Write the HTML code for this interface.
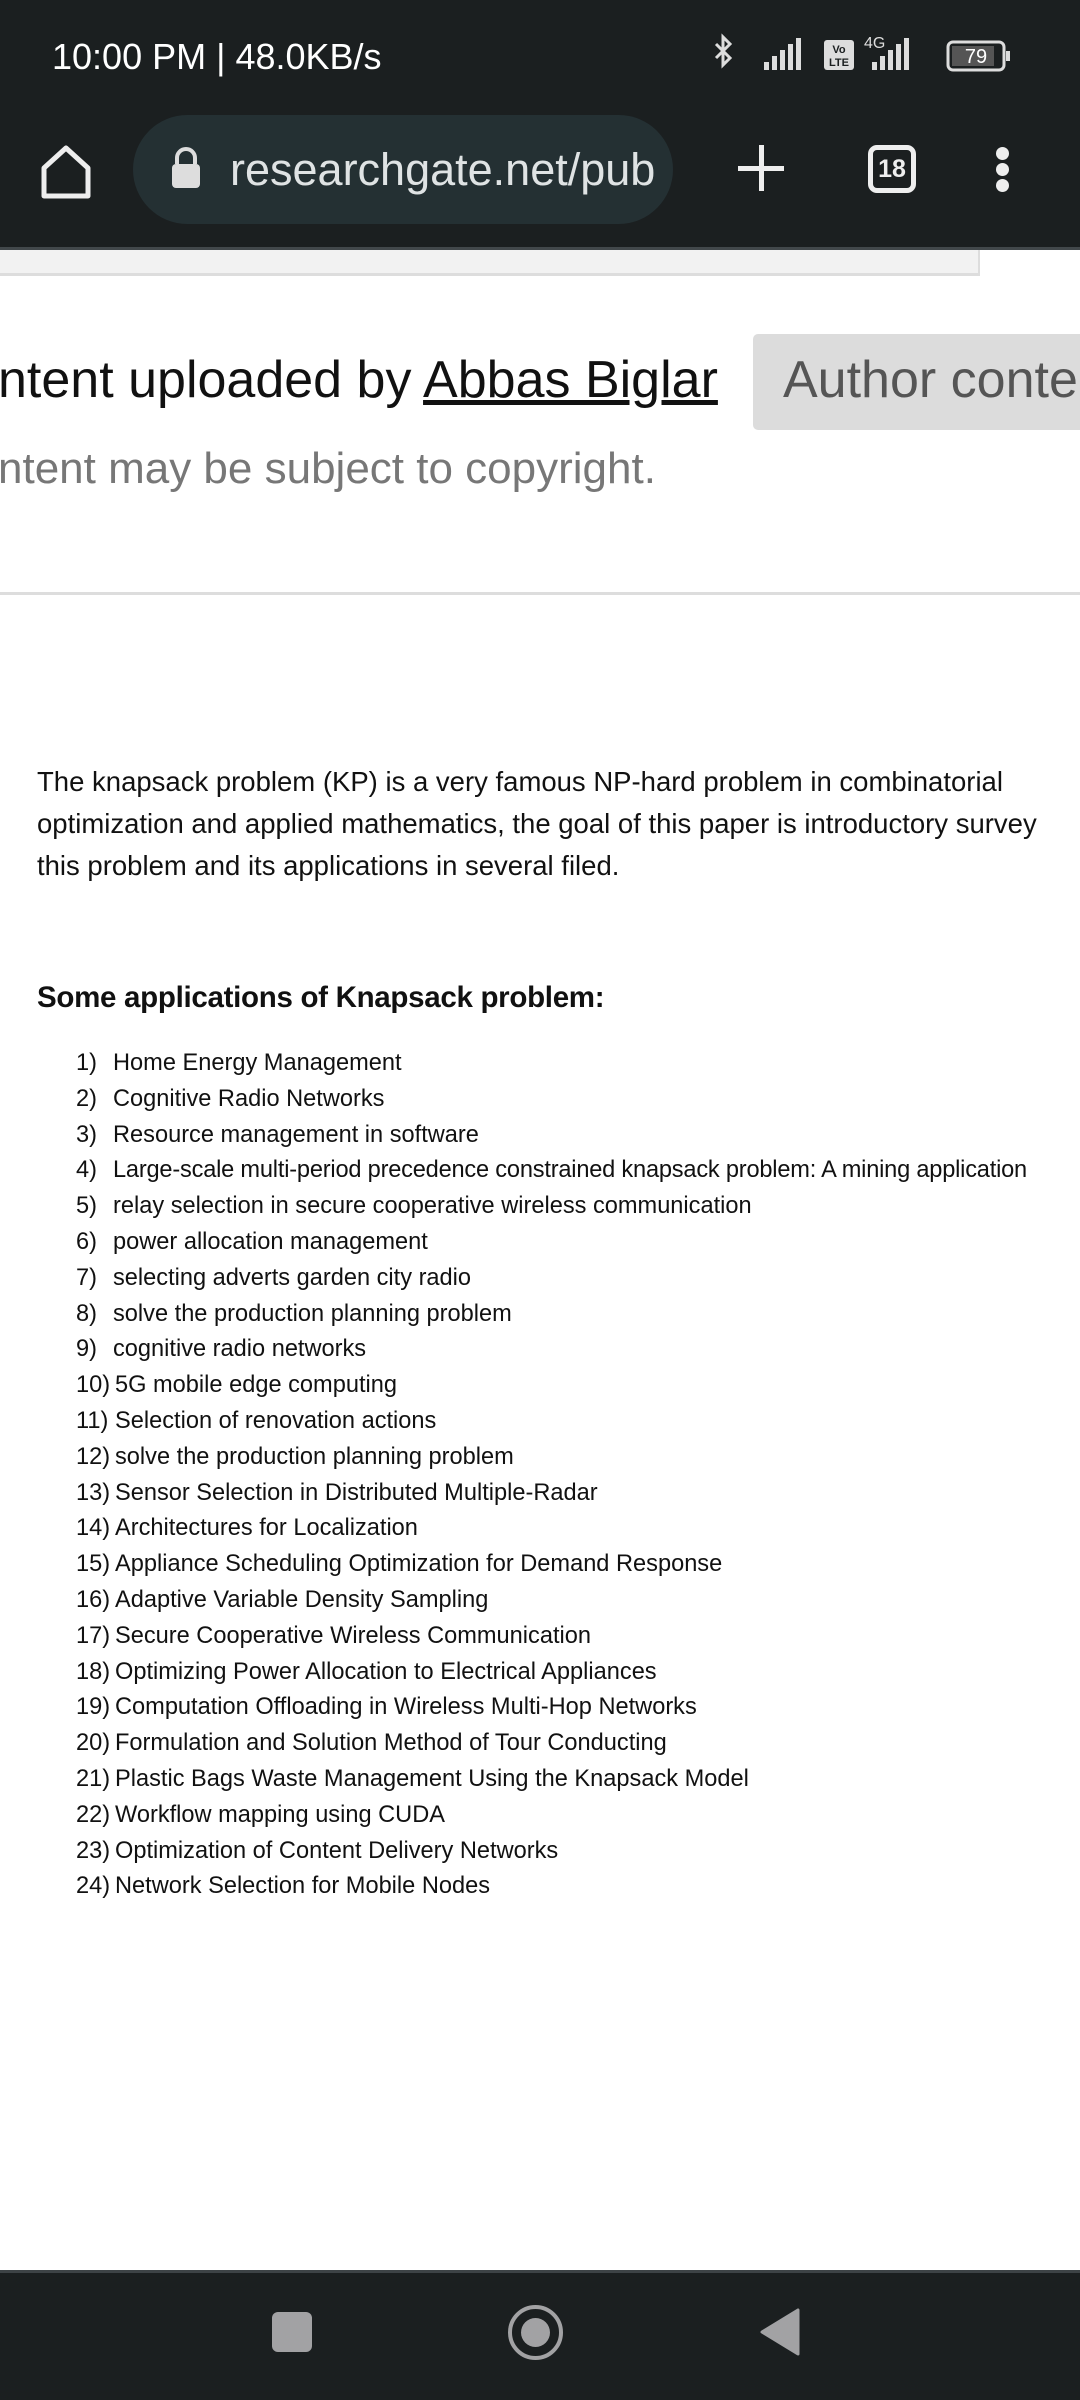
<!DOCTYPE html>
<html><head><meta charset="utf-8"><style>
*{margin:0;padding:0;box-sizing:border-box}
html,body{width:1080px;height:2400px;overflow:hidden;background:#fff;font-family:"Liberation Sans",sans-serif}
.abs{position:absolute}
#top{left:0;top:0;width:1080px;height:247px;background:#1b1f20}
.li{position:absolute;left:0;width:1080px;font-size:23.6px;color:#111;white-space:nowrap}
.li .n{position:absolute;left:76px}
.li .t{position:absolute;left:113px}
</style></head><body>
<div id="top" class="abs">
 <div class="abs" style="left:52px;top:36px;color:#fff;font-size:36px">10:00 PM | 48.0KB/s</div>
 <svg class="abs" style="left:712px;top:30px" width="310" height="50" viewBox="0 0 310 50">
  <path d="M4 14l14 14-7 7V7l7 7L4 28" stroke="#ddd" stroke-width="3" fill="none"/>
  <g fill="#ddd"><rect x="52" y="32" width="5" height="8"/><rect x="60" y="26" width="5" height="14"/><rect x="68" y="20" width="5" height="20"/><rect x="76" y="14" width="5" height="26"/><rect x="84" y="8" width="5" height="32"/></g>
  <rect x="112" y="10" width="30" height="30" rx="3" fill="#ddd"/>
  <text x="127" y="23" font-size="11" text-anchor="middle" fill="#1b1f20" font-weight="bold">Vo</text>
  <text x="127" y="36" font-size="11" text-anchor="middle" fill="#1b1f20" font-weight="bold">LTE</text>
  <text x="152" y="18" font-size="16" fill="#ddd">4G</text>
  <g fill="#ddd"><rect x="160" y="32" width="5" height="8"/><rect x="168" y="26" width="5" height="14"/><rect x="176" y="20" width="5" height="20"/><rect x="184" y="14" width="5" height="26"/><rect x="192" y="8" width="5" height="32"/></g>
  <rect x="236" y="12" width="56" height="28" rx="5" stroke="#ddd" stroke-width="3" fill="none"/>
  <rect x="240" y="16" width="42" height="20" fill="#555"/>
  <text x="264" y="33" font-size="20" text-anchor="middle" fill="#fff">79</text>
  <rect x="294" y="21" width="4" height="10" fill="#ddd"/>
 </svg>
 <svg class="abs" style="left:40px;top:144px" width="52" height="56" viewBox="0 0 52 56"><path d="M4 24L26 4l22 20v28H4z" stroke="#eee" stroke-width="5" fill="none" stroke-linejoin="round"/></svg>
 <div class="abs" style="left:133px;top:115px;width:540px;height:109px;border-radius:55px;background:#243033"></div>
 <svg class="abs" style="left:170px;top:146px" width="32" height="44" viewBox="0 0 32 44"><path d="M7 18v-6a9 9 0 0118 0v6" stroke="#ddd" stroke-width="4" fill="none"/><rect x="2" y="18" width="28" height="24" rx="4" fill="#ddd"/></svg>
 <div class="abs" style="left:230px;top:144px;color:#dfe3e4;font-size:45px">researchgate.net/pub</div>
 <div class="abs" style="left:738px;top:166px;width:46px;height:5px;background:#eee"></div>
 <div class="abs" style="left:759px;top:145px;width:5px;height:46px;background:#eee"></div>
 <div class="abs" style="left:868px;top:145px;width:48px;height:48px;border:5px solid #eee;border-radius:9px;color:#eee;font-size:25px;font-weight:bold;text-align:center;line-height:38px">18</div>
 <div class="abs" style="left:996px;top:147px;width:13px;height:13px;border-radius:50%;background:#eee"></div>
 <div class="abs" style="left:996px;top:163px;width:13px;height:13px;border-radius:50%;background:#eee"></div>
 <div class="abs" style="left:996px;top:179px;width:13px;height:13px;border-radius:50%;background:#eee"></div>
</div>
<div class="abs" style="left:0;top:247px;width:1080px;height:3px;background:#42484b"></div>
<div class="abs" style="left:0;top:250px;width:980px;height:26px;background:#f2f2f2;border-right:2px solid #ddd;border-bottom:3px solid #ddd"></div>
<div class="abs" style="left:-2px;top:350px;font-size:52px;color:#111;white-space:nowrap">ntent uploaded by <span style="text-decoration:underline">Abbas Biglar</span></div>
<div class="abs" style="left:753px;top:334px;width:340px;height:96px;background:#dcdcdc;border-radius:5px;font-size:52px;color:#555;padding:16px 0 0 30px;white-space:nowrap">Author conte</div>
<div class="abs" style="left:-2px;top:444px;font-size:44px;color:#777;white-space:nowrap">ntent may be subject to copyright.</div>
<div class="abs" style="left:0;top:592px;width:1080px;height:3px;background:#ddd"></div>
<div class="abs" style="left:37px;top:761px;font-size:27.5px;line-height:42px;color:#111;white-space:nowrap">The knapsack problem (KP) is a very famous NP-hard problem in combinatorial<br>optimization and applied mathematics, the goal of this paper is introductory survey<br>this problem and its applications in several filed.</div>
<div class="abs" style="left:37px;top:981px;font-size:29.5px;font-weight:bold;color:#111;white-space:nowrap;letter-spacing:-0.3px">Some applications of Knapsack problem:</div>
<div class="abs" style="left:0;top:1050px">
<div class="li" style="top:0"><span class="n">1)</span><span class="t">Home Energy Management</span></div>
<div class="li" style="top:35.8px"><span class="n">2)</span><span class="t">Cognitive Radio Networks</span></div>
<div class="li" style="top:71.6px"><span class="n">3)</span><span class="t">Resource management in software</span></div>
<div class="li" style="top:107.4px"><span class="n">4)</span><span class="t" style="letter-spacing:-0.2px">Large-scale multi-period precedence constrained knapsack problem: A mining application</span></div>
<div class="li" style="top:143.2px"><span class="n">5)</span><span class="t">relay selection in secure cooperative wireless communication</span></div>
<div class="li" style="top:179px"><span class="n">6)</span><span class="t">power allocation management</span></div>
<div class="li" style="top:214.8px"><span class="n">7)</span><span class="t">selecting adverts garden city radio</span></div>
<div class="li" style="top:250.6px"><span class="n">8)</span><span class="t">solve the production planning problem</span></div>
<div class="li" style="top:286.4px"><span class="n">9)</span><span class="t">cognitive radio networks</span></div>
<div class="li" style="top:322.2px"><span class="n">10)</span><span class="t" style="left:115px">5G mobile edge computing</span></div>
<div class="li" style="top:358px"><span class="n">11)</span><span class="t" style="left:115px">Selection of renovation actions</span></div>
<div class="li" style="top:393.8px"><span class="n">12)</span><span class="t" style="left:115px">solve the production planning problem</span></div>
<div class="li" style="top:429.6px"><span class="n">13)</span><span class="t" style="left:115px">Sensor Selection in Distributed Multiple-Radar</span></div>
<div class="li" style="top:465.4px"><span class="n">14)</span><span class="t" style="left:115px">Architectures for Localization</span></div>
<div class="li" style="top:501.2px"><span class="n">15)</span><span class="t" style="left:115px">Appliance Scheduling Optimization for Demand Response</span></div>
<div class="li" style="top:537px"><span class="n">16)</span><span class="t" style="left:115px">Adaptive Variable Density Sampling</span></div>
<div class="li" style="top:572.8px"><span class="n">17)</span><span class="t" style="left:115px">Secure Cooperative Wireless Communication</span></div>
<div class="li" style="top:608.6px"><span class="n">18)</span><span class="t" style="left:115px">Optimizing Power Allocation to Electrical Appliances</span></div>
<div class="li" style="top:644.4px"><span class="n">19)</span><span class="t" style="left:115px">Computation Offloading in Wireless Multi-Hop Networks</span></div>
<div class="li" style="top:680.2px"><span class="n">20)</span><span class="t" style="left:115px">Formulation and Solution Method of Tour Conducting</span></div>
<div class="li" style="top:716px"><span class="n">21)</span><span class="t" style="left:115px">Plastic Bags Waste Management Using the Knapsack Model</span></div>
<div class="li" style="top:751.8px"><span class="n">22)</span><span class="t" style="left:115px">Workflow mapping using CUDA</span></div>
<div class="li" style="top:787.6px"><span class="n">23)</span><span class="t" style="left:115px">Optimization of Content Delivery Networks</span></div>
<div class="li" style="top:823.4px"><span class="n">24)</span><span class="t" style="left:115px">Network Selection for Mobile Nodes</span></div>
</div>
<div class="abs" style="left:0;top:2270px;width:1080px;height:3px;background:#3d4346"></div>
<div class="abs" style="left:0;top:2273px;width:1080px;height:127px;background:#1b1f20"></div>
<div class="abs" style="left:272px;top:2312px;width:40px;height:40px;border-radius:6px;background:#a2a2a4"></div>
<div class="abs" style="left:508px;top:2305px;width:55px;height:55px;border-radius:50%;border:4px solid #a2a2a4"></div>
<div class="abs" style="left:521px;top:2318px;width:29px;height:29px;border-radius:50%;background:#a2a2a4"></div>
<svg class="abs" style="left:756px;top:2308px" width="46" height="48" viewBox="0 0 46 48"><path d="M42 2v44L6 24z" fill="#a2a2a4" stroke="#a2a2a4" stroke-width="3" stroke-linejoin="round"/></svg>
</body></html>
